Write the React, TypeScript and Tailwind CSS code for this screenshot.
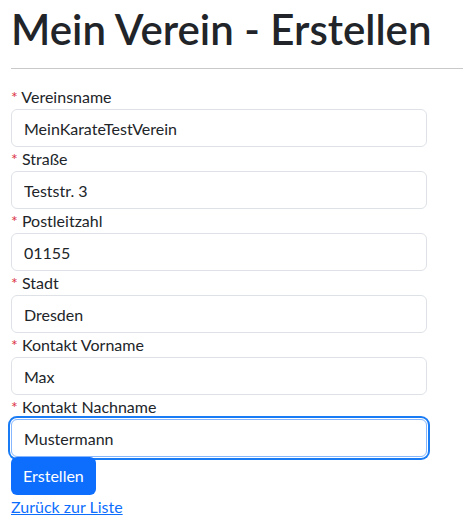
const fields = [
  { label: 'Vereinsname', value: 'MeinKarateTestVerein' },
  { label: 'Straße', value: 'Teststr. 3' },
  { label: 'Postleitzahl', value: '01155' },
  { label: 'Stadt', value: 'Dresden' },
  { label: 'Kontakt Vorname', value: 'Max' },
  { label: 'Kontakt Nachname', value: 'Mustermann', focused: true },
]

export default function App() {
  return (
    <div className="min-h-screen bg-white pl-[11px] text-[#212529] font-['Lato','Noto_Sans',sans-serif] overflow-hidden">
      <h1 className="mt-[4px] text-[42px] leading-[1.2] font-semibold whitespace-nowrap">
        Mein Verein - Erstellen
      </h1>

      <hr className="mt-[14px] border-0 border-t border-[#c8c9ca]" />

      {/* Formular */}
      <form className="mt-[16px] w-[416px]">
        {fields.map((f) => (
          <div key={f.label}>
            <label className="block text-[16px] leading-[24px]">
              <span className="text-[#dc3545]">*</span> {f.label}
            </label>
            <input
              readOnly
              value={f.value}
              className={
                f.focused
                  ? 'block w-full h-[38px] px-[12px] text-[16px] rounded-[6px] border border-[#86b7fe] bg-white text-[#212529] outline-none shadow-[0_0_0_1px_#fff,0_0_0_3px_#1a7cf5]'
                  : 'block w-full h-[38px] px-[12px] text-[16px] rounded-[6px] border border-[#dee2e6] bg-white text-[#212529] outline-none'
              }
            />
          </div>
        ))}

        <button
          type="button"
          className="block h-[38px] px-[12px] text-[16px] text-white bg-[#0d6efd] rounded-[6px]"
        >
          Erstellen
        </button>
      </form>

      <a href="#" className="inline-block text-[16px] leading-[24px] text-[#0d6efd] underline">
        Zurück zur Liste
      </a>
    </div>
  )
}
